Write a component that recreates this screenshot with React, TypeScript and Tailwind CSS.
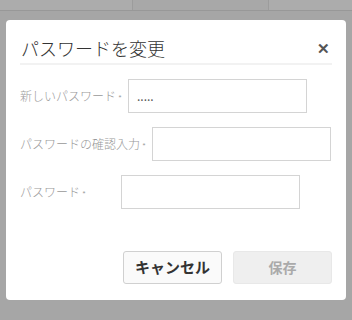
import React from "react";

const font = { fontFamily: '"Noto Sans CJK JP", "Noto Sans", sans-serif' };

export default function App() {
  return (
    <div className="w-[352px] h-[320px] bg-[#a6a6a6] flex flex-col overflow-hidden" style={font}>
      <div className="h-[10px] flex">
        <div className="w-[133px] bg-[#acacac] border-r border-[#9c9c9c]" />
        <div className="w-[135px] bg-[#a8a8a8]" />
        <div className="flex-1 bg-[#acacac] border-l border-[#9c9c9c]" />
      </div>
      <div className="h-[1px] bg-[#989898]" />
      <div className="h-[9px]" />
      <div className="mx-[6px] h-[280px] bg-white rounded-[4px] flex flex-col">
        <div className="h-[43px] flex items-end justify-between pl-[15px] pr-[16px] pb-[3px]">
          <div className="text-[18px] leading-[24px] text-[#333] font-light">パスワードを変更</div>
          <div className="text-[15px] leading-[24px] text-[#555] font-bold">✕</div>
        </div>
        <div className="mx-[14px] h-[2px] bg-[#f2f2f2]" />
        <div className="flex flex-col pl-[14px] pt-[14px] font-light">
          <div className="flex items-center h-[34px]">
            <div className="w-[108px] text-[12px] text-[#999] flex items-center">新しいパスワード<span className="text-[9px] ml-[2px] translate-y-[3px]">*</span></div>
            <div className="w-[179px] h-[34px] border border-[#d4d4d4] flex items-center pl-[8px] text-[12px] font-normal text-[#555]">.....</div>
          </div>
          <div className="flex items-center h-[34px] mt-[14px]">
            <div className="w-[132px] text-[12px] text-[#999] flex items-center">パスワードの確認入力<span className="text-[9px] ml-[2px] translate-y-[3px]">*</span></div>
            <div className="w-[179px] h-[34px] border border-[#d4d4d4]" />
          </div>
          <div className="flex items-center h-[34px] mt-[14px]">
            <div className="w-[101px] text-[12px] text-[#999] flex items-center">パスワード<span className="text-[9px] ml-[2px] translate-y-[3px]">*</span></div>
            <div className="w-[179px] h-[34px] border border-[#d4d4d4]" />
          </div>
        </div>
        <div className="flex justify-end gap-[11px] pr-[14px] mt-[42px]">
          <div className="w-[99px] h-[33px] border border-[#d0d0d0] bg-[#fafafa] rounded-[3px] flex items-center justify-center text-[15px] font-bold text-[#333]">キャンセル</div>
          <div className="w-[99px] h-[33px] border border-[#e8e8e8] bg-[#efefef] rounded-[3px] flex items-center justify-center text-[14px] font-bold text-[#aaa]">保存</div>
        </div>
      </div>
    </div>
  );
}
